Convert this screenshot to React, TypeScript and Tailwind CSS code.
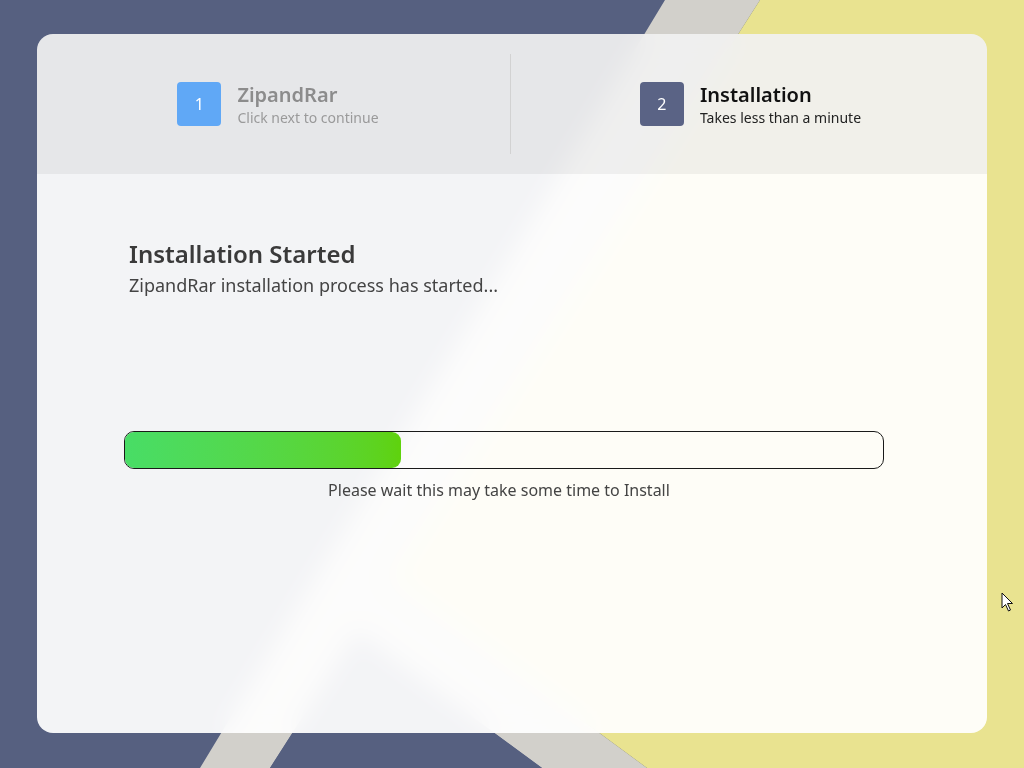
function Wallpaper() {
  return (
    <svg
      className="absolute inset-0 h-full w-full"
      viewBox="0 0 1024 768"
      preserveAspectRatio="none"
    >
      <rect width="1024" height="768" fill="#566080" />
      <polygon
        points="665,0 760,0 390,579 647,768 542,768 357,632 270,768 200,768"
        fill="#d2d0cb"
      />
      <polygon points="760,0 1024,0 1024,768 647,768 390,579" fill="#e9e390" />
      <polygon points="357,632 270,768 542,768" fill="#566080" />
    </svg>
  );
}

function Cursor() {
  return (
    <svg className="absolute left-[1001px] top-[592px]" width="14" height="21" viewBox="0 0 14 21">
      <path d="M1 1 L1 16 L4.5 12.5 L7.5 19 L9.5 18 L6.5 11.5 L11.5 11.5 Z" fill="#fff" stroke="#111" strokeWidth="1" strokeLinejoin="round" />
    </svg>
  );
}

function Step({
  n,
  title,
  sub,
  active,
}: {
  n: number;
  title: string;
  sub: string;
  active?: boolean;
}) {
  return (
    <div
      className={
        "flex items-center justify-center " +
        (active ? "flex-1 pl-[3px]" : "w-[473px] pl-[9px]")
      }
    >
      <div className="flex items-center gap-4">
        <div
          className={
            "flex h-11 w-11 items-center justify-center rounded text-base text-white " +
            (active ? "bg-[#5a6385]" : "bg-[#60a8f6]")
          }
        >
          {n}
        </div>
        <div className="flex flex-col">
          <div
            className={
              "text-[20px] font-semibold leading-[26px] " +
              (active ? "text-[#111]" : "text-[#8c8c8c]")
            }
          >
            {title}
          </div>
          <div className={"mt-px text-sm leading-[18px] " + (active ? "text-[#222]" : "text-[#9a9a9a]")}>
            {sub}
          </div>
        </div>
      </div>
    </div>
  );
}

export default function App() {
  const progress = 36.4;
  return (
    <div
      className="relative h-[768px] w-[1024px] overflow-hidden"
      style={{ fontFamily: '"Noto Sans", "Open Sans", sans-serif' }}
    >
      <Wallpaper />
      <div className="relative pl-[37px] pt-[34px]">
        <div className="flex h-[699px] w-[950px] flex-col overflow-hidden rounded-2xl bg-white/[0.93] backdrop-blur-md">
          <header className="flex h-[140px] items-center bg-black/[0.05] py-5">
            <Step n={1} title="ZipandRar" sub="Click next to continue" />
            <div className="h-[100px] w-px bg-[#d2d2d2]" />
            <Step n={2} title="Installation" sub="Takes less than a minute" active />
          </header>
          <main className="flex flex-1 flex-col px-[87px] pt-[65px]">
            <div className="pl-[5px]">
              <h1 className="text-[24px] font-semibold leading-[30px] text-[#3a3a3a]">
                Installation Started
              </h1>
              <p className="mt-[4px] text-[18px] leading-6 text-[#444]">
                ZipandRar installation process has started...
              </p>
            </div>
            <div className="mt-[134px] h-[38px] w-[760px] rounded-[10px] border border-[#1a1a1a] bg-transparent">
              <div
                className="h-full rounded-[9px] bg-gradient-to-r from-[#48dd66] to-[#5fd20c]"
                style={{ width: `${progress}%` }}
              />
            </div>
            <p className="mt-[9px] w-[750px] text-center text-base text-[#444]">
              Please wait this may take some time to Install
            </p>
          </main>
        </div>
      </div>
      <Cursor />
    </div>
  );
}
